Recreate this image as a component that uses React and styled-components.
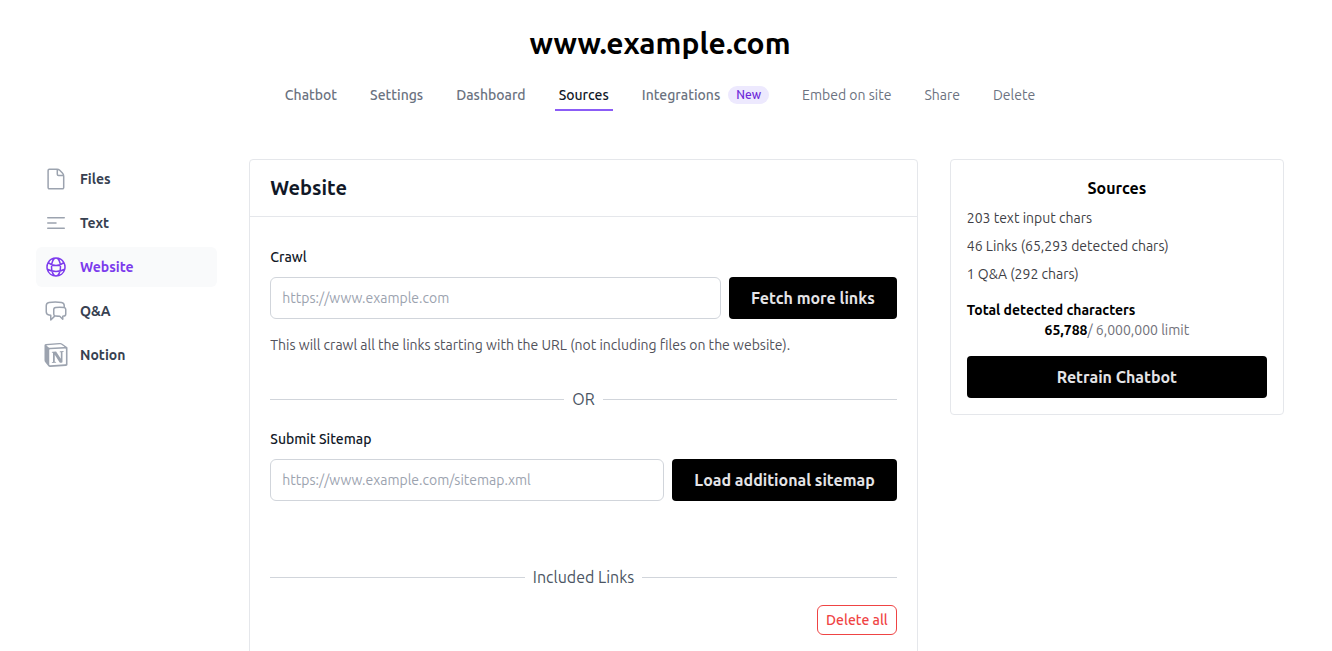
import { useState } from 'react';
import styled, { createGlobalStyle } from 'styled-components';
import { HiOutlineBars3CenterLeft, HiOutlineGlobeAlt, HiOutlineChatBubbleLeftRight } from 'react-icons/hi2';
import { SiNotion } from 'react-icons/si';

const GlobalStyle = createGlobalStyle`
  *, *::before, *::after {
    box-sizing: border-box;
  }
  html {
    scrollbar-width: none;
  }
  body {
    margin: 0;
    background: #fff;
    color: #000;
    font-family: Ubuntu, 'Noto Sans', sans-serif;
    font-size: 14px;
    line-height: 20px;
  }
  h1, h2, h3, p, ul {
    margin: 0;
    padding: 0;
  }
  ul {
    list-style: none;
  }
  button, input {
    font-family: inherit;
  }
`;

const Page = styled.div`
  padding: 25px 48px 0 36px;
`;

const Title = styled.h1`
  font-size: 30px;
  line-height: 36px;
  font-weight: 700;
  text-align: center;
`;

const Tabs = styled.nav`
  display: flex;
  justify-content: center;
  gap: 25px;
  margin: 24px 0 48px;
`;

const Tab = styled.a`
  display: flex;
  align-items: center;
  gap: 8px;
  padding: 0 4px 4px;
  border-bottom: 2px solid ${({ $active }) => ($active ? '#8b5cf6' : 'transparent')};
  color: ${({ $active }) => ($active ? '#111827' : '#6b7280')};
  font-weight: ${({ $light }) => ($light ? 400 : 500)};
  text-decoration: none;
`;

const Badge = styled.span`
  padding: 0 8px;
  border-radius: 9px;
  background: #ede9fe;
  color: #6d28d9;
  font-size: 12px;
  line-height: 18px;
`;

const Layout = styled.div`
  display: grid;
  grid-template-columns: repeat(12, minmax(0, 1fr));
  column-gap: 32px;
`;

const SideNav = styled.aside`
  grid-column: span 2;
`;

const SideList = styled.ul`
  display: flex;
  flex-direction: column;
  gap: 4px;
`;

const SideLink = styled.a`
  display: flex;
  align-items: center;
  gap: 12px;
  height: 40px;
  padding: 0 8px;
  border-radius: 6px;
  background: ${({ $active }) => ($active ? '#f9fafb' : 'transparent')};
  color: ${({ $active }) => ($active ? '#7c3aed' : '#374151')};
  font-weight: 600;
  text-decoration: none;

  svg {
    width: 24px;
    height: 24px;
    color: ${({ $active }) => ($active ? '#7c3aed' : '#9ca3af')};
  }
`;

const Content = styled.div`
  grid-column: span 10;
  display: grid;
  grid-template-columns: minmax(0, 2fr) minmax(0, 1fr);
  column-gap: 32px;
  align-items: start;
`;

const Card = styled.section`
  border: 1px solid #e5e7eb;
  border-radius: 4px;
`;

const CardHeader = styled.header`
  padding: 14px 20px;
  border-bottom: 1px solid #e5e7eb;
`;

const CardTitle = styled.h2`
  color: #111827;
  font-size: 20px;
  line-height: 28px;
  font-weight: 600;
`;

const CardBody = styled.div`
  padding: 30px 20px 48px;
`;

const Label = styled.label`
  display: block;
  color: #111827;
  font-weight: 500;
`;

const FieldRow = styled.div`
  display: flex;
  gap: 8px;
  margin-top: 10px;
`;

const Input = styled.input`
  flex: 1;
  min-width: 0;
  height: 42px;
  padding: 0 11px;
  border: 1px solid #d1d5db;
  border-radius: 6px;
  background: #fff;
  color: #111827;
  font-size: 14px;

  &::placeholder {
    color: #9ca3af;
    opacity: 1;
  }
`;

const PrimaryButton = styled.button`
  width: ${({ $full }) => ($full ? '100%' : 'auto')};
  height: 42px;
  padding: 0 22px;
  border: 0;
  border-radius: 4px;
  background: #000;
  color: #e4e4e7;
  font-size: 16px;
  line-height: 24px;
  font-weight: 600;
  white-space: nowrap;
`;

const Hint = styled.p`
  margin-top: 16px;
  color: #52525b;
`;

const Divider = styled.div`
  display: flex;
  align-items: center;
  gap: 8px;
  margin: ${({ $wide }) => ($wide ? '64px 0 16px' : '32px 0 18px')};
  color: #4b5563;
  font-size: 16px;
  line-height: 24px;

  &::before,
  &::after {
    content: '';
    flex: 1;
    border-top: 1px solid #d1d5db;
  }
`;

const Actions = styled.div`
  display: flex;
  justify-content: flex-end;
`;

const DeleteButton = styled.button`
  height: 30px;
  padding: 0 8px;
  border: 1px solid #ef4444;
  border-radius: 6px;
  background: #fff;
  color: #ef4444;
  font-size: 14px;
  font-weight: 500;
`;

const Summary = styled(Card)`
  padding: 16px;
`;

const SummaryTitle = styled.h3`
  font-size: 16px;
  line-height: 24px;
  font-weight: 600;
  text-align: center;
`;

const SummaryList = styled.ul`
  display: flex;
  flex-direction: column;
  gap: 8px;
  margin: 8px 0 16px;
  color: #3f3f46;
`;

const TotalLabel = styled.p`
  font-weight: 600;
`;

const Total = styled.p`
  margin-bottom: 16px;
  color: #71717a;
  text-align: center;

  b {
    color: #000;
    font-weight: 700;
  }
`;

const DocumentIcon = () => (
  <svg viewBox="0 0 24 24" fill="none" stroke="currentColor" strokeWidth="1.5" strokeLinejoin="round" aria-hidden="true">
    <path d="M13 2.2H5.3a1.2 1.2 0 0 0-1.2 1.2v17.2a1.2 1.2 0 0 0 1.2 1.2h13.2a1.2 1.2 0 0 0 1.2-1.2V9.2c0-1.2-.5-2.3-1.3-3.2l-2.7-2.7C15 2.6 14 2.2 13 2.2z" />
    <path d="M13.3 2.4v4.8a1.2 1.2 0 0 0 1.2 1.2h5" />
  </svg>
);

const tabs = [
  { name: 'Chatbot' },
  { name: 'Settings' },
  { name: 'Dashboard' },
  { name: 'Sources' },
  { name: 'Integrations', badge: 'New' },
  { name: 'Embed on site', light: true },
  { name: 'Share', light: true },
  { name: 'Delete', light: true },
];

const sources = [
  { name: 'Files', icon: DocumentIcon },
  { name: 'Text', icon: HiOutlineBars3CenterLeft },
  { name: 'Website', icon: HiOutlineGlobeAlt },
  { name: 'Q&A', icon: HiOutlineChatBubbleLeftRight },
  { name: 'Notion', icon: SiNotion },
];

const App = () => {
  const [activeSource, setActiveSource] = useState('Website');
  const [crawlUrl, setCrawlUrl] = useState('');
  const [sitemapUrl, setSitemapUrl] = useState('');

  return (
    <Page>
      <GlobalStyle />
      <Title>www.example.com</Title>
      <Tabs>
        {tabs.map((tab) => (
          <Tab key={tab.name} href="#" $active={tab.name === 'Sources'} $light={tab.light}>
            {tab.name}
            {tab.badge && <Badge>{tab.badge}</Badge>}
          </Tab>
        ))}
      </Tabs>

      <Layout>
        <SideNav>
          <SideList>
            {sources.map(({ name, icon: Icon }) => (
              <li key={name}>
                <SideLink href="#" $active={name === activeSource} onClick={() => setActiveSource(name)}>
                  <Icon />
                  {name}
                </SideLink>
              </li>
            ))}
          </SideList>
        </SideNav>

        <Content>
          <Card>
            <CardHeader>
              <CardTitle>Website</CardTitle>
            </CardHeader>
            <CardBody>
              <Label htmlFor="crawl">Crawl</Label>
              <FieldRow>
                <Input
                  id="crawl"
                  type="url"
                  placeholder="https://www.example.com"
                  value={crawlUrl}
                  onChange={(e) => setCrawlUrl(e.target.value)}
                />
                <PrimaryButton type="button">Fetch more links</PrimaryButton>
              </FieldRow>
              <Hint>This will crawl all the links starting with the URL (not including files on the website).</Hint>

              <Divider>OR</Divider>

              <Label htmlFor="sitemap">Submit Sitemap</Label>
              <FieldRow>
                <Input
                  id="sitemap"
                  type="url"
                  placeholder="https://www.example.com/sitemap.xml"
                  value={sitemapUrl}
                  onChange={(e) => setSitemapUrl(e.target.value)}
                />
                <PrimaryButton type="button">Load additional sitemap</PrimaryButton>
              </FieldRow>

              <Divider $wide>Included Links</Divider>
              <Actions>
                <DeleteButton type="button">Delete all</DeleteButton>
              </Actions>
            </CardBody>
          </Card>

          <Summary>
            <SummaryTitle>Sources</SummaryTitle>
            <SummaryList>
              <li>203 text input chars</li>
              <li>46 Links (65,293 detected chars)</li>
              <li>1 Q&amp;A (292 chars)</li>
            </SummaryList>
            <TotalLabel>Total detected characters</TotalLabel>
            <Total>
              <b>65,788</b>/ 6,000,000 limit
            </Total>
            <PrimaryButton type="button" $full>
              Retrain Chatbot
            </PrimaryButton>
          </Summary>
        </Content>
      </Layout>
    </Page>
  );
};

export default App;
